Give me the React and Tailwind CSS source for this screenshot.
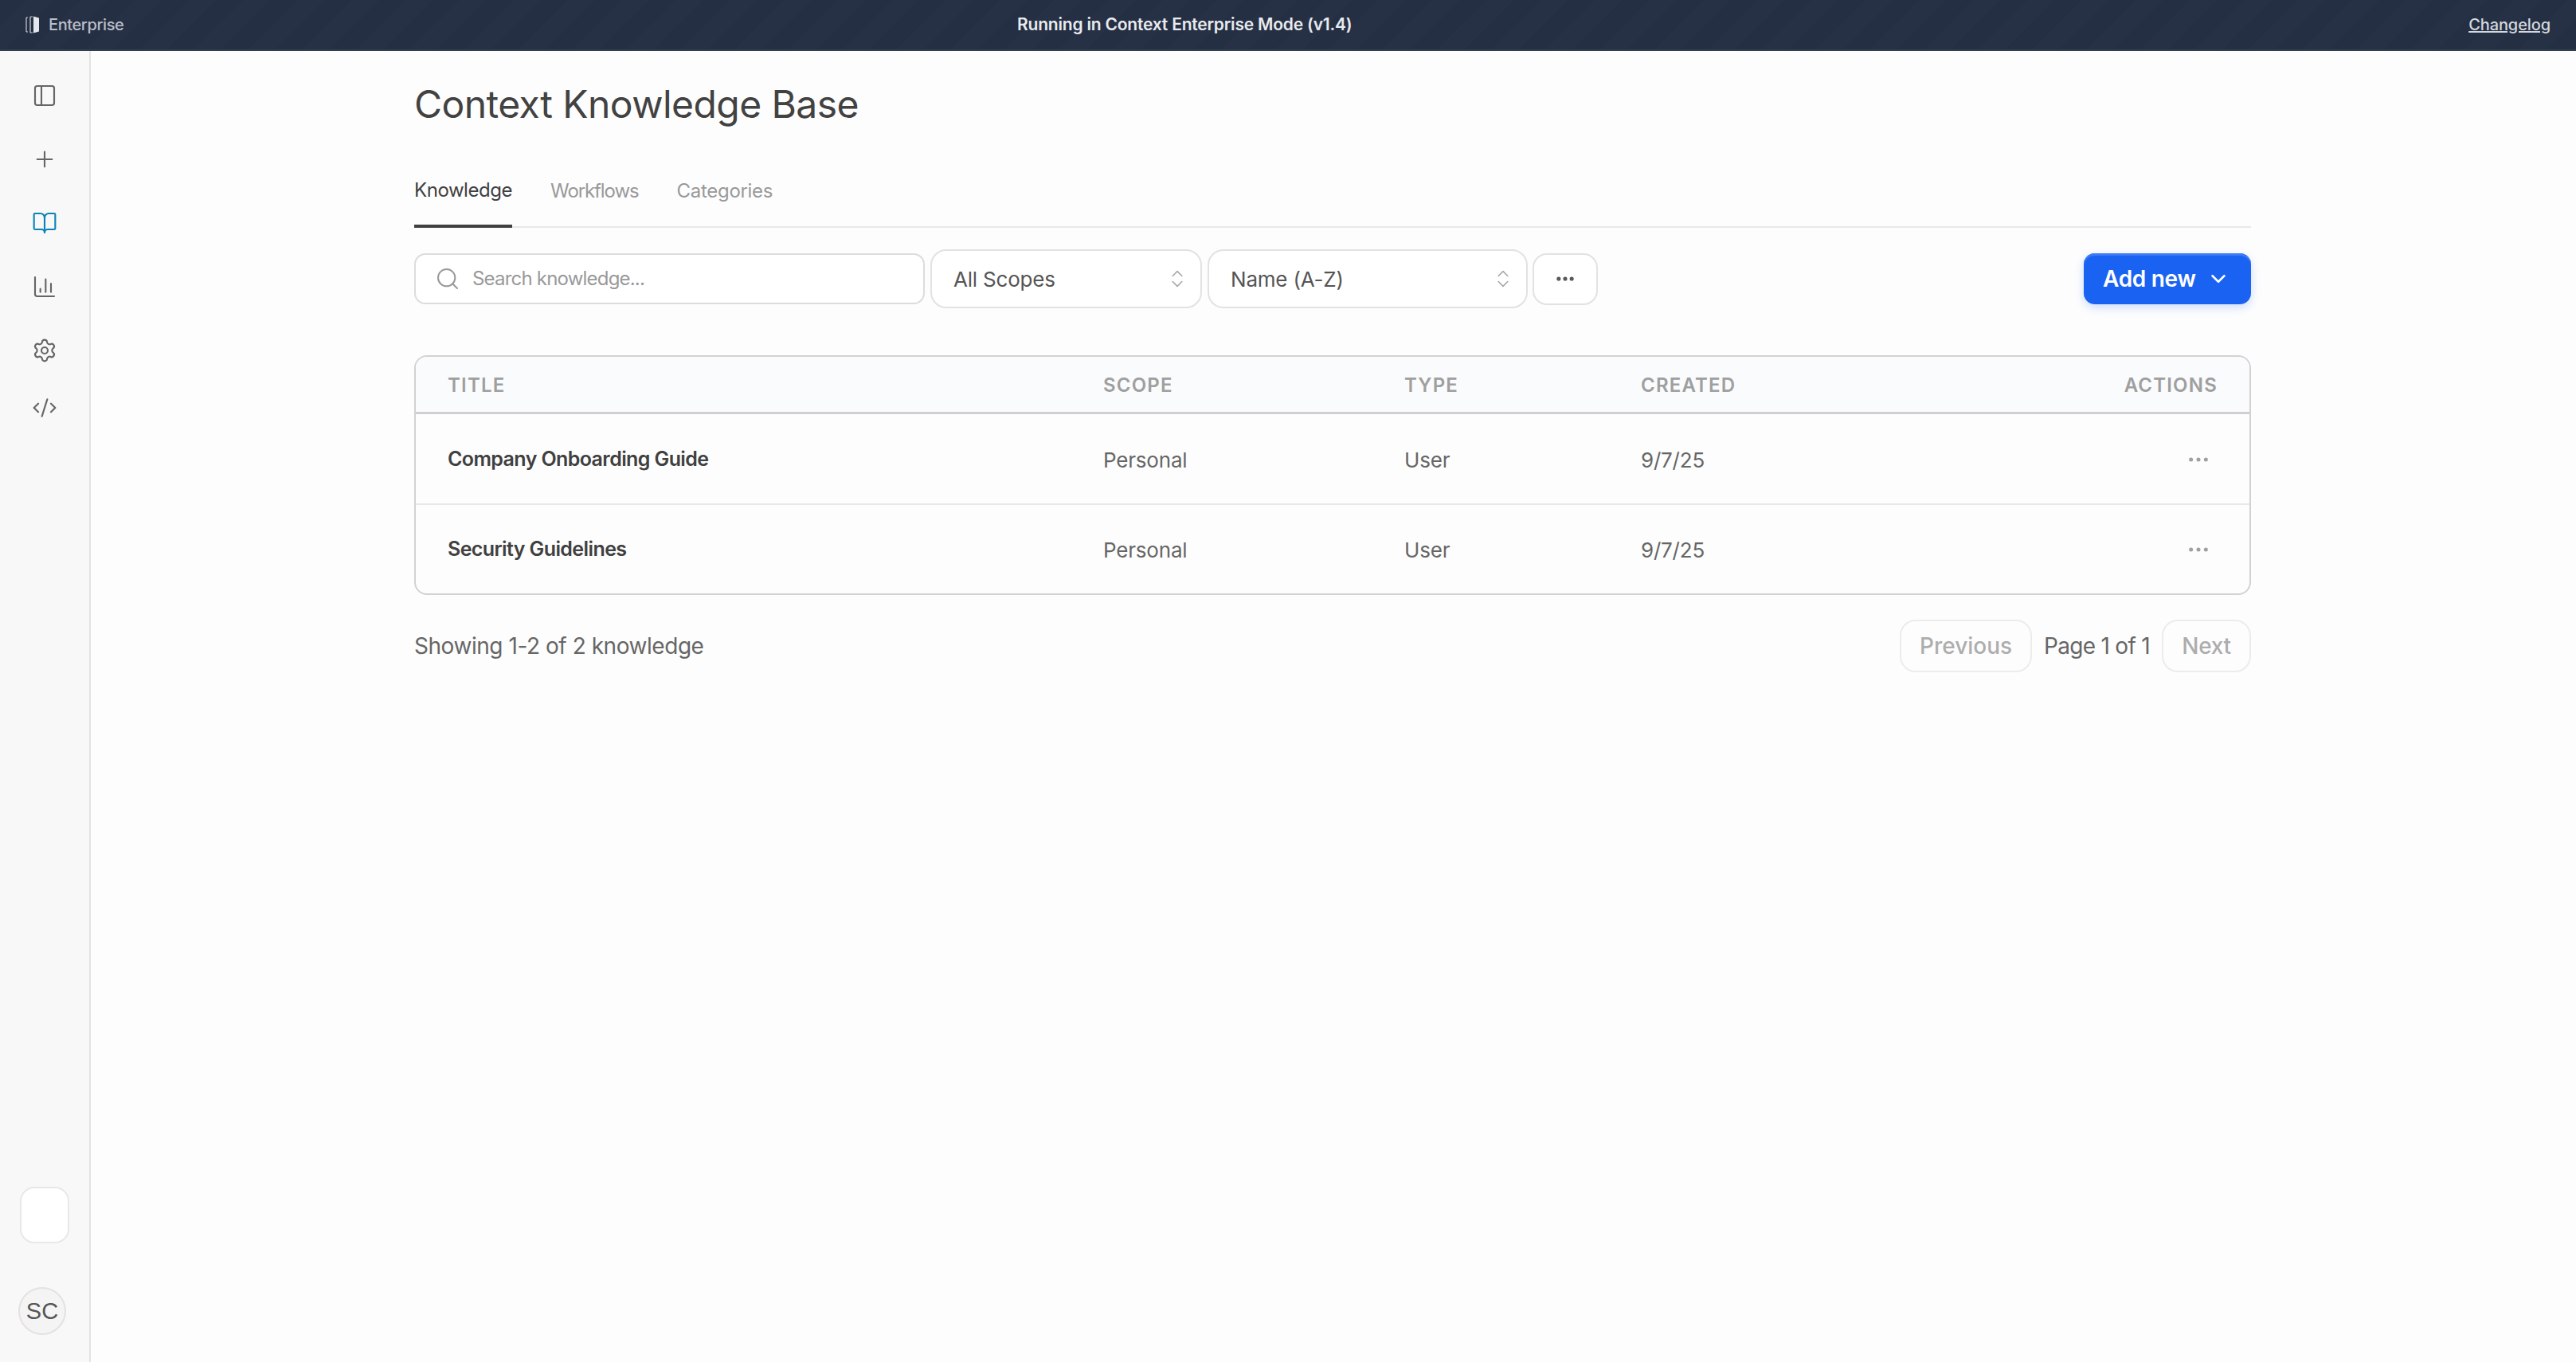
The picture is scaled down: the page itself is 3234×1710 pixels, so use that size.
import React from "react";
import { PanelLeft, Plus, BookOpen, ChartColumn, Settings, CodeXml, Search, ChevronsUpDown, ChevronDown, Ellipsis } from "lucide-react";

function NavIcon({ Icon, className = "text-[#666666]", box = "h-[80px]" }) {
  return (
    <button className={`flex w-full items-center justify-center ${box} ${className}`}>
      <Icon size={32} strokeWidth={1.6} />
    </button>
  );
}

function Logo() {
  return (
    <svg width="18" height="24" viewBox="0 0 18 24" className="shrink-0">
      <path d="M1 3v18M1 3h2M1 21h2" stroke="#cbd0d8" strokeWidth="1.2" fill="none" />
      <path d="M6 2v20M6 2h3M6 22h3" stroke="#cbd0d8" strokeWidth="1.2" fill="none" />
      <path d="M10 1.5l7 2v17l-7 2z" fill="#e4e7eb" />
    </svg>
  );
}

function Select({ label, widthClass }) {
  return (
    <div className={`flex h-[74px] items-center justify-between rounded-[20px] border-2 border-[#e2e2e2] bg-white pl-[27px] pr-[15px] text-[26px] tracking-[-0.2px] text-[#555555] ${widthClass}`}>
      <span>{label}</span>
      <ChevronsUpDown size={28} strokeWidth={1.4} className="text-[#a8a8a8]" />
    </div>
  );
}

function Row({ title, last }) {
  return (
    <div className={`grid grid-cols-[823px_378px_297px_1fr] items-center pl-[40px] pr-[42px] text-[26px] tracking-[-0.2px] text-[#666666] ${last ? "h-[112px] pt-[2px]" : "h-[114px] border-b-2 border-[#e8e8e8] pt-[2px]"}`}>
      <span className="text-[25px] font-semibold tracking-[-0.6px] text-[#404040]">{title}</span>
      <span>Personal</span>
      <span>User</span>
      <div className="flex items-center justify-between">
        <span>9/7/25</span>
        <Ellipsis size={32} strokeWidth={1.8} className="mr-[6px] text-[#a0a0a0]" />
      </div>
    </div>
  );
}

export default function App() {
  return (
    <div className="flex h-screen flex-col overflow-hidden bg-[#fdfdfd] font-[Inter,sans-serif]">
      <header className="flex h-[64px] shrink-0 items-center border-b-2 border-[#333e51] bg-[repeating-linear-gradient(135deg,#242f43_0px,#242f43_24px,#263145_24px,#263145_48px)] pl-[32px] pr-[32px]">
        <div className="flex w-[1245px] items-center gap-[11px] text-[20px] font-medium tracking-[-0.4px] text-[#b9bec8]">
          <Logo />
          <span>Enterprise</span>
        </div>
        <span className="text-[21px] font-semibold tracking-[-0.2px] text-[#e8eaee]">Running in Context Enterprise Mode (v1.4)</span>
        <a className="ml-auto text-[20px] font-medium tracking-[-0.1px] text-[#d3d7de] underline">Changelog</a>
      </header>

      <div className="flex min-h-0 flex-1">
        <aside className="flex w-[114px] shrink-0 flex-col border-r-2 border-[#e3e3e3] bg-[#f8f8f8] pt-[16px]">
          <NavIcon Icon={PanelLeft} />
          <NavIcon Icon={Plus} />
          <NavIcon Icon={BookOpen} className="text-[#0b84b4]" />
          <NavIcon Icon={ChartColumn} />
          <NavIcon Icon={Settings} />
          <NavIcon Icon={CodeXml} box="h-[64px]" />
          <div className="mt-auto ml-[25px] h-[71px] w-[62px] rounded-[18px] border-2 border-[#e8e8ec] bg-white" />
          <div className="mt-[55px] mb-[34px] ml-[23px] flex h-[60px] w-[60px] items-center justify-center rounded-full border-2 border-[#e2e2e2] bg-[#f4f4f4] pt-[2px] font-['Liberation_Sans',sans-serif] text-[29px] text-[#555555]">
            SC
          </div>
        </aside>

        <main className="min-w-0 flex-1">
          <div className="ml-[406px] w-[2306px] pt-[31px]">
            <h1 className="h-[72px] text-[48px] leading-[72px] font-normal tracking-[-0.55px] text-[#424242]">Context Knowledge Base</h1>

            <div className="mt-[41px] flex h-[78px] gap-[48px] border-b-2 border-[#e8e8ec] text-[24px] tracking-[-0.3px] text-[#999999]">
              <div className="-mb-[2px] flex items-center border-b-4 border-[#404040] pb-[12px] tracking-[-0.45px] text-[#404040]">Knowledge</div>
              <div className="flex items-center pb-[12px] tracking-[-1.1px]">Workflows</div>
              <div className="flex items-center pb-[12px]">Categories</div>
            </div>

            <div className="mt-[27px] flex h-[74px] items-center">
              <div className="flex h-[64px] w-[641px] items-center gap-[15px] rounded-[14px] border-2 border-[#dcdcdc] bg-white pl-[24px] text-[24px] tracking-[-0.8px] text-[#999999]">
                <Search size={32} strokeWidth={1.5} />
                <span>Search knowledge...</span>
              </div>
              <div className="ml-[7px] flex items-center gap-[7px]">
                <Select label="All Scopes" widthClass="w-[341px]" />
                <Select label="Name (A-Z)" widthClass="w-[402px]" />
              </div>
              <button className="ml-[6px] flex h-[65px] w-[82px] items-center justify-center rounded-[18px] border-2 border-[#e2e2e2] bg-white text-[#555555]">
                <Ellipsis size={28} strokeWidth={2.4} />
              </button>
              <button className="ml-auto flex h-[64px] w-[210px] items-center gap-[13px] rounded-[14px] bg-[#1a62f2] pl-[24px] text-[28px] font-semibold tracking-[-0.3px] text-white shadow-[inset_0_3px_1px_#3f7cf5,0_4px_12px_rgba(26,98,242,0.22)]">
                <span>Add new</span>
                <ChevronDown size={30} strokeWidth={2} />
              </button>
            </div>

            <div className="mt-[59px] overflow-hidden rounded-[16px] border-2 border-[#d2d2d2] bg-[#fdfdfd]">
              <div className="grid h-[72px] grid-cols-[823px_378px_297px_1fr] items-center border-b-[3px] border-[#d0d0d2] bg-[#fafbfc] pt-[2px] pl-[40px] pr-[40px] text-[24px] font-semibold tracking-[1.2px] text-[#9f9f9f]">
                <span>TITLE</span>
                <span>SCOPE</span>
                <span>TYPE</span>
                <div className="flex justify-between">
                  <span>CREATED</span>
                  <span>ACTIONS</span>
                </div>
              </div>
              <Row title="Company Onboarding Guide" />
              <div className="-mt-px">
                <Row title="Security Guidelines" last />
              </div>
            </div>

            <div className="mt-[31px] flex h-[66px] items-center text-[28px] tracking-[-0.45px] text-[#666666]">
              <span>Showing 1-2 of 2 knowledge</span>
              <div className="ml-auto flex items-center">
                <button className="h-[66px] w-[166px] rounded-[20px] border-2 border-[#ececec] font-medium tracking-[0px] text-[#adadad]">Previous</button>
                <span className="mx-[15px] tracking-[-0.7px]">Page 1 of 1</span>
                <button className="h-[66px] w-[112px] rounded-[20px] border-2 border-[#ececec] font-medium tracking-[-0.3px] text-[#adadad]">Next</button>
              </div>
            </div>
          </div>
        </main>
      </div>
    </div>
  );
}
